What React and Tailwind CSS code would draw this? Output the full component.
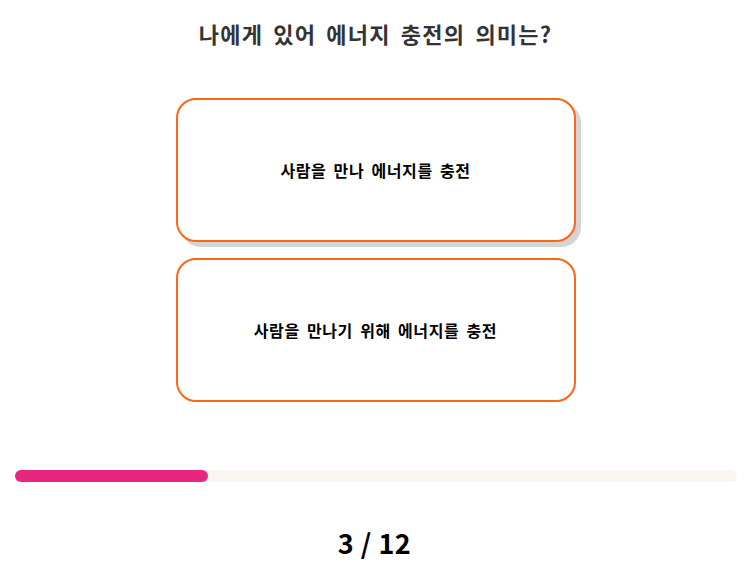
import React from 'react';

const options = ['사람을 만나 에너지를 충전', '사람을 만나기 위해 에너지를 충전'];

const App = () => {
  const current = 3;
  const total = 12;

  return (
    <div className="w-[749px] h-[578px] bg-white flex flex-col items-center" style={{ fontFamily: '"Noto Sans CJK KR", "Noto Sans", sans-serif' }}>
      <h1 className="mt-[17px] ml-[2px] h-[32px] text-[22px] leading-[32px] font-bold text-[#333333] tracking-[1.2px] [word-spacing:4px]">나에게 있어 에너지 충전의 의미는?</h1>

      <div className="mt-[49px] ml-[2px] flex flex-col gap-4 w-[400px]">
        {options.map((text, i) => (
          <button
            key={i}
            className={`h-[144px] w-full rounded-[20px] border-2 border-[#ff6516] bg-white flex items-center justify-center text-[16px] font-bold text-black tracking-[0.6px] [word-spacing:3px] ${
              i === 0 ? 'shadow-[5px_5px_0_#d4d4d4]' : ''
            }`}
          >
            {text}
          </button>
        ))}
      </div>

      <div className="mt-[68px] w-[722px] h-3 rounded-full bg-[#f9f6f2] self-start ml-[15px]">
        <div className="h-3 w-[193px] rounded-full bg-[#e8267f]" />
      </div>

      <div className="mt-[43px] text-[27px] leading-[36px] font-bold text-black tracking-[0.5px]">
        {current} / {total}
      </div>
    </div>
  );
};

export default App;
